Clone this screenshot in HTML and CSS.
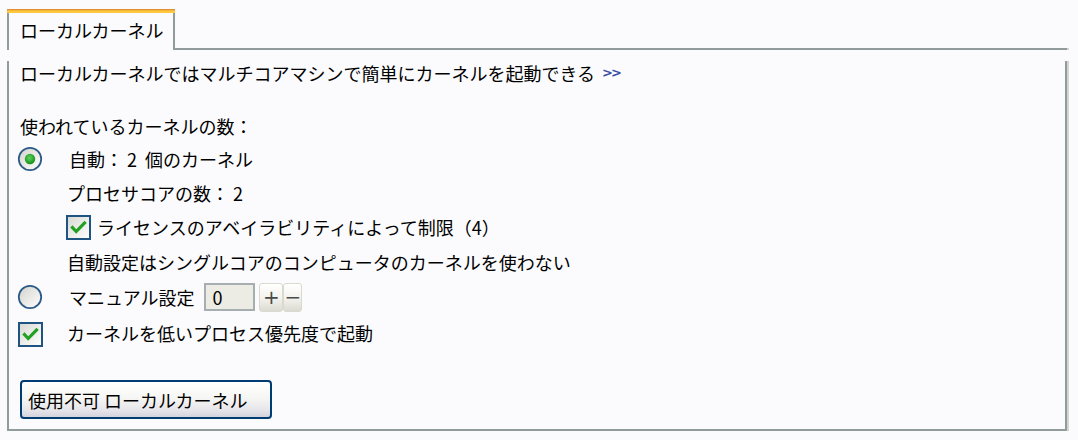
FILE: index.html
```html
<!DOCTYPE html>
<html lang="ja">
<head>
<meta charset="utf-8">
<title>ローカルカーネル</title>
<link rel="stylesheet" href="styles.css">
</head>
<body>
<div class="frame">
  <div class="tabs">
    <div class="tab">ローカルカーネル</div>
    <div class="tab-fill"></div>
  </div>
  <div class="panel">
    <p class="intro">ローカルカーネルではマルチコアマシンで簡単にカーネルを起動できる<a class="more" href="#">&gt;&gt;</a></p>
    <p class="label">使われているカーネルの数：</p>

    <div class="row r1">
      <span class="radio">
        <svg width="26" height="26" viewBox="0 0 26 26">
          <defs>
            <linearGradient id="rg1" x1="0" y1="0" x2="1" y2="1"><stop offset="0" stop-color="#d2d2cc"/><stop offset="1" stop-color="#ffffff"/></linearGradient>
            <radialGradient id="gd1" cx="0.45" cy="0.4" r="0.6"><stop offset="0" stop-color="#5fd35f"/><stop offset="1" stop-color="#14901a"/></radialGradient>
          </defs>
          <circle cx="13" cy="13" r="11.2" fill="url(#rg1)" stroke="#2d5b88" stroke-width="1.8"/>
          <circle cx="13" cy="13" r="5.2" fill="url(#gd1)"/>
        </svg>
      </span>
      <span class="opt-text">自動： 2&nbsp; 個のカーネル</span>
    </div>
    <div class="row sub">プロセサコアの数： 2</div>
    <div class="row sub">
      <span class="check sub-check">
        <svg width="25" height="25" viewBox="0 0 25 25">
          <defs><linearGradient id="cg1" x1="0" y1="0" x2="1" y2="1"><stop offset="0" stop-color="#d8d8d2"/><stop offset="1" stop-color="#ffffff"/></linearGradient></defs>
          <rect x="1" y="1" width="23" height="23" fill="url(#cg1)" stroke="#1f5482" stroke-width="2"/>
          <path d="M6.5 12.5 L10.2 16.5 L18.5 8" fill="none" stroke="#21a121" stroke-width="3.2" stroke-linecap="square"/>
        </svg>
      </span>
      <span>ライセンスのアベイラビリティによって制限（4）</span>
    </div>
    <div class="row sub r4">自動設定はシングルコアのコンピュータのカーネルを使わない</div>

    <div class="row r5">
      <span class="radio">
        <svg width="26" height="26" viewBox="0 0 26 26">
          <defs>
            <linearGradient id="rg2" x1="0" y1="0" x2="1" y2="1"><stop offset="0" stop-color="#d2d2cc"/><stop offset="1" stop-color="#ffffff"/></linearGradient>
          </defs>
          <circle cx="13" cy="13" r="11.2" fill="url(#rg2)" stroke="#2d5b88" stroke-width="1.8"/>
        </svg>
      </span>
      <span class="opt-text">マニュアル設定</span>
      <input class="num" type="text" value="0">
      <span class="spin spin-plus">+</span><span class="spin spin-minus">−</span>
    </div>

    <div class="row r6">
      <span class="check main-check">
        <svg width="25" height="25" viewBox="0 0 25 25">
          <defs><linearGradient id="cg2" x1="0" y1="0" x2="1" y2="1"><stop offset="0" stop-color="#d8d8d2"/><stop offset="1" stop-color="#ffffff"/></linearGradient></defs>
          <rect x="1" y="1" width="23" height="23" fill="url(#cg2)" stroke="#1f5482" stroke-width="2"/>
          <path d="M6.5 12.5 L10.2 16.5 L18.5 8" fill="none" stroke="#21a121" stroke-width="3.2" stroke-linecap="square"/>
        </svg>
      </span>
      <span class="opt-text">カーネルを低いプロセス優先度で起動</span>
    </div>

    <button class="btn" type="button">使用不可 ローカルカーネル</button>
  </div>
</div>
</body>
</html>
```
FILE: styles.css
```css
html, body {
  margin: 0;
  padding: 0;
  background: #fbfbfd;
}
body {
  font-family: "Noto Sans CJK JP", "Noto Sans", sans-serif;
  font-size: 18px;
  color: #000;
}
.frame {
  padding: 9px 0 0 7px;
  width: 1060px;
}
.tabs {
  display: flex;
  height: 41px;
}
.tab {
  position: relative;
  box-sizing: border-box;
  width: 168px;
  border-left: 2px solid #919b9c;
  border-right: 2px solid #919b9c;
  padding: 3px 0 3px 11px;
  display: flex;
  align-items: center;
  line-height: 24px;
}
.tab::before {
  content: "";
  position: absolute;
  left: -2px;
  right: -2px;
  top: 0;
  height: 4px;
  border-radius: 2px 2px 0 0;
  background: linear-gradient(#e3912f 0 1px, #f7b43a 1px 2px, #ffc83f 2px);
}
.tab-fill {
  flex: 1;
  align-self: flex-end;
  height: 0;
  border-bottom: 2px solid #919b9c;
  box-shadow: 2px 0 0 #d6d5cc;
}
.panel {
  box-sizing: border-box;
  width: 1060px;
  border: 2px solid #919b9c;
  border-top: none;
  padding: 0 11px 10px 11px;
  box-shadow: 2px 0 0 #d6d5cc, 0 2px 0 #d6d5cc, 2px 2px 0 #d6d5cc;
}
.intro {
  margin: 11px 0 0;
  height: 24px;
  line-height: 24px;
  display: flex;
  align-items: center;
}
.more {
  margin-left: 7px;
  color: #3c4ea6;
  text-decoration: none;
  font-family: "DejaVu Sans", sans-serif;
  font-size: 13px;
  letter-spacing: -2px;
  font-weight: bold;
}
.label {
  margin: 29px 0 0;
  height: 24px;
  line-height: 24px;
}
.row {
  display: flex;
  align-items: center;
  height: 34px;
  white-space: nowrap;
}
.r1 { margin-top: 4px; }
.r4 { margin-top: 1px; }
.r5 { margin-top: 1px; }
.r6 { margin-top: 2px; }
.sub {
  padding-left: 47px;
}
.radio {
  display: flex;
  width: 26px;
  height: 26px;
  margin-left: -3px;
}
.opt-text {
  margin-left: 26px;
}
.check {
  display: flex;
  width: 25px;
  height: 25px;
}
.sub-check {
  margin-left: -1px;
  margin-right: 6px;
}
.main-check {
  margin-left: -2px;
  margin-top: 3px;
}
.r6 .opt-text {
  margin-left: 24px;
}
.num {
  box-sizing: border-box;
  width: 51px;
  height: 28px;
  margin: 0 0 0 10px;
  padding: 0 0 0 6px;
  border: 2px solid #a7aeb2;
  background: #ecebe4;
  font: inherit;
  font-size: 18px;
  line-height: 24px;
  color: #000;
  outline: none;
}
.spin {
  box-sizing: border-box;
  display: flex;
  align-items: center;
  justify-content: center;
  height: 29px;
  border: 1px solid #dad9cf;
  border-radius: 3px;
  background: linear-gradient(#ffffff, #f4f3ee 50%, #dcdbd2);
  color: #4a4a4a;
  font-family: "DejaVu Sans", sans-serif;
  font-size: 20px;
  line-height: 1;
}
.spin-plus {
  width: 24px;
  margin-left: 4px;
}
.spin-minus {
  width: 19px;
}
.btn {
  display: block;
  box-sizing: border-box;
  margin: 30px 0 0;
  width: 252px;
  height: 39px;
  padding: 0 0 0 6px;
  text-align: left;
  border: 2px solid #003c74;
  border-radius: 4px;
  background: linear-gradient(#ffffff, #f6f6f4 45%, #e6e5ea 80%, #d4d3dd);
  font: inherit;
  font-size: 18px;
  color: #000;
  white-space: nowrap;
}
```
